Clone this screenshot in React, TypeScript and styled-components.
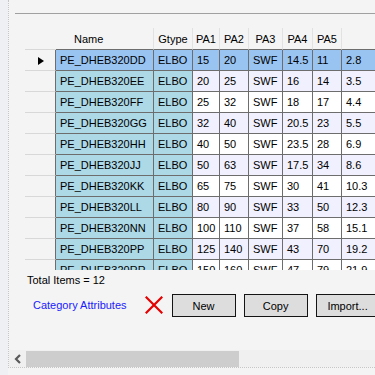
import React from 'react'
import styled, { createGlobalStyle, css } from 'styled-components'

const GlobalStyle = createGlobalStyle`
  html, body {
    margin: 0;
    padding: 0;
    background: #f4f4f4;
    font-family: 'Liberation Sans', Arial, sans-serif;
    font-size: 11px;
    color: #000;
  }
`

const Screen = styled.div`
  display: flex;
  align-items: flex-start;
  width: 375px;
  height: 375px;
  overflow: hidden;
  background: #f4f4f4;
`

const Gutter = styled.div`
  flex: 0 0 8px;
  height: 375px;
  background: #eff0f3;
`

const Panel = styled.div`
  flex: 1;
  min-width: 0;
  height: 368px;
  box-sizing: border-box;
  display: flex;
  flex-direction: column;
  border-left: 1px dotted #c6c6c6;
  border-bottom: 1px dotted #c6c6c6;
`

const Body = styled.div`
  flex: 1;
  min-height: 0;
  overflow: hidden;
  display: flex;
  flex-direction: column;
`

const TopRule = styled.div`
  flex: 0 0 1px;
  margin: 13px 0 0 6px;
  background: #a0a0a0;
`

const Grid = styled.div`
  display: grid;
  grid-template-columns: 31px 98px 39px 27px 29px 34px 30px 29px 80px;
  grid-template-rows: 22px;
  grid-auto-rows: 21px;
  width: max-content;
  height: 242px;
  overflow: hidden;
  margin: 14px 0 0 16px;
  flex-shrink: 0;
`

const cellBase = css`
  box-sizing: border-box;
  display: flex;
  align-items: center;
  white-space: nowrap;
  overflow: hidden;
  line-height: 13px;
`

const Corner = styled.div`
  ${cellBase};
  border-bottom: 1px solid #d8d8d8;
`

const HeadCell = styled.div<{ $indent?: number }>`
  ${cellBase};
  justify-content: ${(p) => (p.$indent ? 'flex-start' : 'center')};
  padding-left: ${(p) => p.$indent ?? 0}px;
  border-right: 1px solid #e2e2e2;
  border-bottom: 1px solid #6d6d6d;
  padding-top: 1px;
`

const RowHead = styled.div`
  ${cellBase};
  justify-content: center;
  border-bottom: 1px solid #d8d8d8;
  border-right: 1px solid #6d6d6d;
  padding-top: 2px;
`

const Pointer = styled.span`
  width: 0;
  height: 0;
  border-top: 4.5px solid transparent;
  border-bottom: 4.5px solid transparent;
  border-left: 6px solid #000;
  margin-left: 2px;
`

const Cell = styled.div<{ $key?: boolean; $selected?: boolean; $alt?: boolean }>`
  ${cellBase};
  padding-left: 4px;
  border-right: 1px solid #6d6d6d;
  border-bottom: 1px solid #6d6d6d;
  background: ${(p) =>
    p.$selected ? '#99c3f0' : p.$key ? '#add8e6' : p.$alt ? '#f0f0fe' : '#ffffff'};
`

const Total = styled.div`
  margin: 4px 0 0 18px;
  line-height: 13px;
  white-space: nowrap;
`

const Actions = styled.div`
  display: flex;
  align-items: center;
  margin: 7px 0 0 24px;
`

const CategoryLink = styled.span`
  flex-shrink: 0;
  white-space: nowrap;
  color: #1a1aff;
  line-height: 13px;
  cursor: pointer;
`

const DeleteMark = styled.svg`
  flex-shrink: 0;
  margin: 0 9px 0 18px;
  position: relative;
  top: -1px;
`

const Button = styled.button`
  flex-shrink: 0;
  width: 64px;
  height: 23px;
  margin-right: 8px;
  box-sizing: border-box;
  border: 1px solid #141414;
  background: #dddddd;
  font-family: inherit;
  font-size: 11px;
  color: #000;
  padding: 0;
  white-space: nowrap;
`

const ScrollBar = styled.div`
  flex: 0 0 17px;
  display: flex;
  background: #f0f0f0;
`

const ScrollArrow = styled.div`
  flex: 0 0 17px;
  display: flex;
  align-items: center;
  justify-content: center;
`

const Thumb = styled.div`
  flex: 0 0 213px;
  margin-top: 1px;
  background: #cdcdcd;
`

const headers = ['Name', 'Gtype', 'PA1', 'PA2', 'PA3', 'PA4', 'PA5', '']

const rows = [
  ['PE_DHEB320DD', 'ELBO', '15', '20', 'SWF', '14.5', '11', '2.8'],
  ['PE_DHEB320EE', 'ELBO', '20', '25', 'SWF', '16', '14', '3.5'],
  ['PE_DHEB320FF', 'ELBO', '25', '32', 'SWF', '18', '17', '4.4'],
  ['PE_DHEB320GG', 'ELBO', '32', '40', 'SWF', '20.5', '23', '5.5'],
  ['PE_DHEB320HH', 'ELBO', '40', '50', 'SWF', '23.5', '28', '6.9'],
  ['PE_DHEB320JJ', 'ELBO', '50', '63', 'SWF', '17.5', '34', '8.6'],
  ['PE_DHEB320KK', 'ELBO', '65', '75', 'SWF', '30', '41', '10.3'],
  ['PE_DHEB320LL', 'ELBO', '80', '90', 'SWF', '33', '50', '12.3'],
  ['PE_DHEB320NN', 'ELBO', '100', '110', 'SWF', '37', '58', '15.1'],
  ['PE_DHEB320PP', 'ELBO', '125', '140', 'SWF', '43', '70', '19.2'],
  ['PE_DHEB320RR', 'ELBO', '150', '160', 'SWF', '47', '79', '21.9']
]

const App: React.FC = () => {
  return (
    <>
      <GlobalStyle />
      <Screen>
        <Gutter />
        <Panel>
          <Body>
            <TopRule />
            <Grid>
              <Corner />
              {headers.map((h, i) => (
                <HeadCell key={i} $indent={i === 0 ? 18 : undefined}>
                  {h}
                </HeadCell>
              ))}
              {rows.map((r, ri) => (
                <React.Fragment key={r[0]}>
                  <RowHead>{ri === 0 && <Pointer />}</RowHead>
                  {r.map((v, ci) => (
                    <Cell
                      key={ci}
                      $key={ci < 2}
                      $selected={ri === 0}
                      $alt={ri % 2 === 1}
                    >
                      {v}
                    </Cell>
                  ))}
                </React.Fragment>
              ))}
            </Grid>
            <Total>Total Items = 12</Total>
            <Actions>
              <CategoryLink>Category Attributes</CategoryLink>
              <DeleteMark width="18" height="18" viewBox="0 0 18 18">
                <path
                  d="M1.5 1.5 L16.5 16.5 M16.5 1.5 L1.5 16.5"
                  stroke="#e60000"
                  strokeWidth="2.2"
                  strokeLinecap="square"
                />
              </DeleteMark>
              <Button>New</Button>
              <Button>Copy</Button>
              <Button>Import...</Button>
            </Actions>
          </Body>
          <ScrollBar>
            <ScrollArrow>
              <svg width="8" height="10" viewBox="0 0 8 10">
                <polyline
                  points="6,1 2,5 6,9"
                  fill="none"
                  stroke="#5a5a5a"
                  strokeWidth="2.2"
                />
              </svg>
            </ScrollArrow>
            <Thumb />
          </ScrollBar>
        </Panel>
      </Screen>
    </>
  )
}

export default App
